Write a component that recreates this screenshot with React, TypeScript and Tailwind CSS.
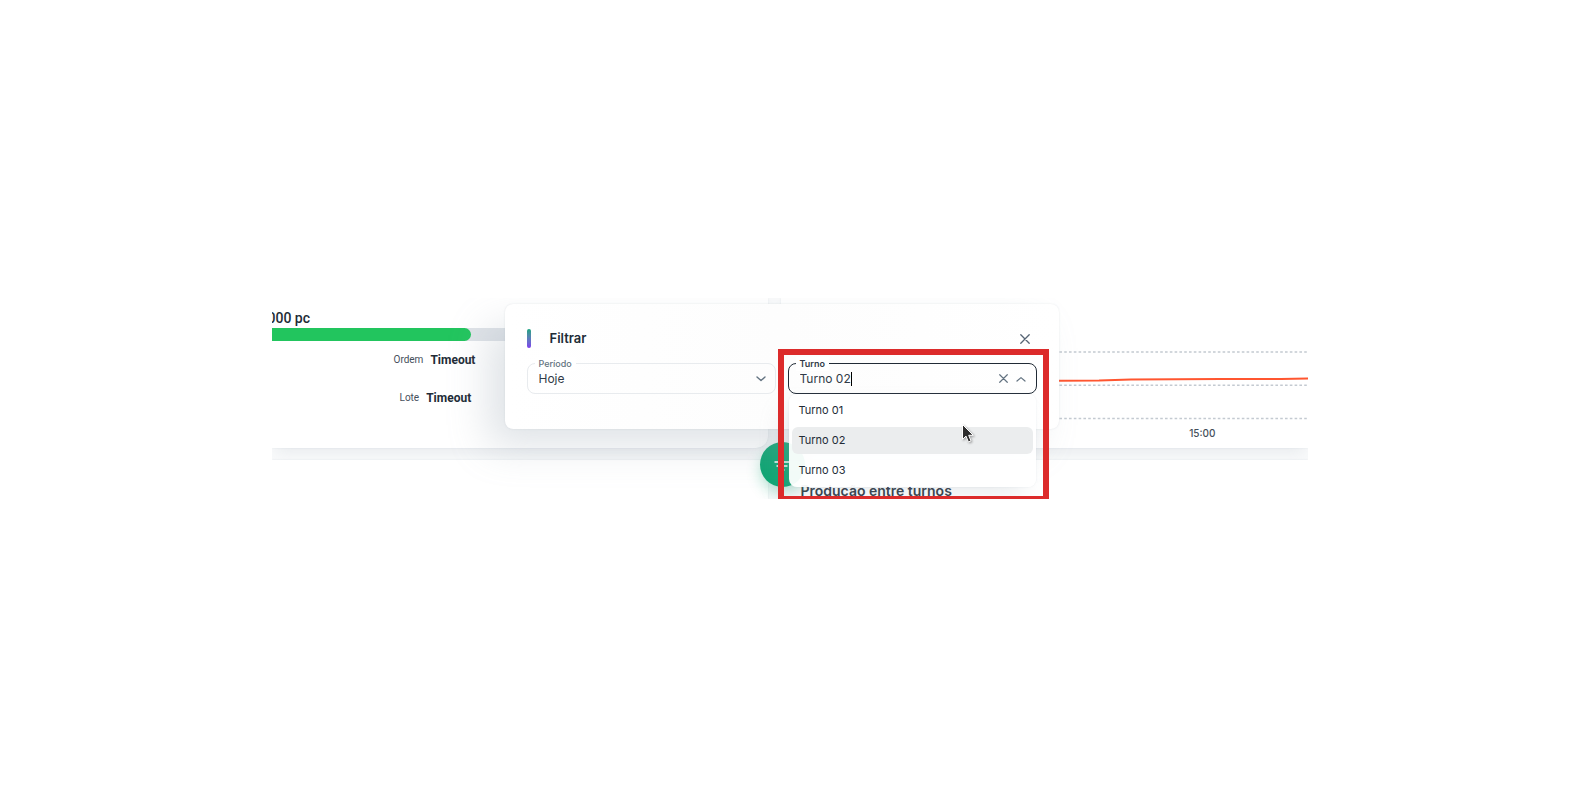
import { useState } from "react";

const shifts = ["Turno 01", "Turno 02", "Turno 03"];

function CloseIcon({ className }: { className: string }) {
  return (
    <svg viewBox="0 0 10 10" className={className} fill="none" stroke="currentColor" strokeWidth="1.3" strokeLinecap="round" aria-hidden="true">
      <path d="M.8.8 9.2 9.2M9.2.8.8 9.2" />
    </svg>
  );
}

function ProductionCard() {
  return (
    <section className="rounded-br-xl bg-white pt-3 pb-[42px] font-['Roboto',sans-serif] shadow-[0_0_2px_rgba(145,158,171,0.2),0_8px_16px_-4px_rgba(145,158,171,0.16)]">
      <p className="-ml-1 h-[18px] text-[14px] leading-4 font-medium">000 pc</p>
      <div className="h-[13px] bg-[#dfe3e8]">
        <div className="h-full w-[199px] rounded-r-full bg-[#22c55e]" />
      </div>
      <dl className="ml-[122px] flex flex-col gap-[22px] pt-[11px] leading-4">
        <div className="flex items-center gap-[7px]">
          <dt className="text-[10px] text-[#454f5b]">Ordem</dt>
          <dd className="text-[12px] font-bold">Timeout</dd>
        </div>
        <div className="ml-[6px] flex items-center gap-[7px]">
          <dt className="text-[10px] text-[#454f5b]">Lote</dt>
          <dd className="text-[12px] font-bold">Timeout</dd>
        </div>
      </dl>
    </section>
  );
}

function ChartCard() {
  return (
    <section className="rounded-bl-xl bg-white shadow-[0_0_2px_rgba(145,158,171,0.2),0_8px_16px_-4px_rgba(145,158,171,0.16)]">
      <svg viewBox="0 0 527 126" className="block h-[126px] w-full" preserveAspectRatio="xMaxYMin slice" aria-hidden="true">
        <g stroke="#c4cad1" strokeWidth="1.6" strokeDasharray="2.6 2.2">
          <path d="M0 54H527M0 87.3H527M0 120.5H527" />
        </g>
        <path d="M0 83 278 82.7 L318 82.5 350 81.6 440 81 500 81 527 80.4" fill="none" stroke="#ff5630" strokeWidth="2" />
      </svg>
      <p className="mr-[92px] text-right text-[10px] leading-[18px] font-medium text-[#454f5b]">15:00</p>
    </section>
  );
}

function FilterDialog() {
  const [shift, setShift] = useState("Turno 02");
  return (
    <div
      role="dialog"
      aria-label="Filtrar"
      className="absolute top-[6px] right-[249px] left-[233px] rounded-lg bg-white bg-linear-to-r from-white via-[#fdfdfd] to-white px-[22px] pt-[25px] pb-[35px] shadow-[0_0_2px_rgba(145,158,171,0.24),-20px_20px_40px_-4px_rgba(145,158,171,0.3)]"
    >
      <header className="flex h-[19px] items-center">
        <span className="h-full w-1 rounded-sm bg-linear-to-b from-[#10a37f] to-[#7c3aed]" />
        <h2 className="ml-[19px] flex-1 text-[13px] leading-[19px] font-semibold">Filtrar</h2>
        <button type="button" aria-label="Fechar" className="mr-[6px] p-px text-[#566474]">
          <CloseIcon className="size-[10px]" />
        </button>
      </header>

      <div className="mt-[15px] grid grid-cols-2 gap-3">
        <div className="relative flex h-[31px] items-center rounded-lg border border-[#e8ebee]">
          <label htmlFor="period" className="absolute -top-[7px] left-[7px] bg-white px-1 text-[9px] leading-[14px] font-medium text-[#637381]">
            Período
          </label>
          <select id="period" className="w-full appearance-none bg-transparent pr-8 pl-[11px] text-[12px] leading-4 text-[#313b47] outline-none">
            <option>Hoje</option>
          </select>
          <svg viewBox="0 0 10 6" className="pointer-events-none absolute right-[9px] h-[6px] w-[10px]" fill="none" stroke="#637381" strokeWidth="1.4" strokeLinecap="round" strokeLinejoin="round" aria-hidden="true">
            <path d="M1 1 5 4.6 9 1" />
          </svg>
        </div>

        <div className="relative flex h-[31px] items-center rounded-lg border border-[#212b36] pl-[11px]">
          <label htmlFor="shift" className="absolute -top-[7px] left-[7px] bg-white px-1 text-[9px] leading-[14px] font-semibold text-[#313b47]">
            Turno
          </label>
          <input
            id="shift"
            role="combobox"
            aria-expanded="true"
            aria-controls="shift-options"
            value={shift}
            onChange={(event) => setShift(event.target.value)}
            className="field-sizing-content bg-transparent text-[12px] leading-4 text-[#313b47] caret-transparent outline-none"
          />
          <span className="h-[14px] w-px bg-black" />
          <button type="button" aria-label="Limpar" onClick={() => setShift("")} className="ml-auto text-[#637381]">
            <CloseIcon className="size-[9px]" />
          </button>
          <button type="button" aria-label="Ocultar opções" className="mr-[10px] ml-[8px] text-[#637381]">
            <svg viewBox="0 0 10 6" className="h-[6px] w-[10px]" fill="none" stroke="currentColor" strokeWidth="1.2" strokeLinecap="round" strokeLinejoin="round" aria-hidden="true">
              <path d="M1 5 5 1.6 9 5" />
            </svg>
          </button>

          <ul
            id="shift-options"
            role="listbox"
            className="absolute top-full right-0 left-0 mt-px flex flex-col gap-[3px] rounded-lg bg-white/95 p-[3px] shadow-[0_0_2px_rgba(145,158,171,0.2),-10px_12px_24px_-4px_rgba(145,158,171,0.2)]"
          >
            {shifts.map((name) => (
              <li
                key={name}
                role="option"
                aria-selected={name === "Turno 02"}
                className="rounded-md px-[7px] text-[11px] leading-[27px] text-[#212b36] aria-selected:bg-[#ebedee]"
              >
                {name}
              </li>
            ))}
          </ul>

          <div className="pointer-events-none absolute -top-[15px] -right-[13px] -left-[11px] h-[153px] border-6 border-[#dc2b2b]" />
          <svg viewBox="0 0 14 21" className="pointer-events-none absolute top-[59px] right-[61px] h-[21px] w-[14px] drop-shadow-[1px_1px_1px_rgba(0,0,0,0.35)]" aria-hidden="true">
            <path d="M1.5 1.5V16.4L5 13.1 7.4 19 10 17.9 7.7 12.3H12.3Z" fill="#2d2d2d" stroke="#fff" strokeWidth="1" strokeLinejoin="round" />
          </svg>
        </div>
      </div>
    </div>
  );
}

export default function App() {
  return (
    <main className="flex min-h-screen items-center justify-center bg-white pt-px font-['Inter',sans-serif] text-[#212b36]">
      <div className="relative w-full max-w-[1036px] overflow-hidden bg-[#f9fafb]">
        <div className="grid grid-cols-[496px_1fr] gap-x-[13px] gap-y-[12px]">
          <ProductionCard />
          <ChartCard />
          <section className="bg-white shadow-[0_0_2px_rgba(145,158,171,0.2)]" />
          <section className="h-[39px] overflow-hidden bg-white pt-[21px] pl-[20px] shadow-[0_0_2px_rgba(145,158,171,0.2)]">
            <h2 className="text-[14px] leading-5 font-semibold text-[#313b47]">Produção entre turnos</h2>
          </section>
        </div>
        <button
          type="button"
          aria-label="Filtros"
          className="absolute bottom-[12px] left-[488px] flex size-[45px] items-center justify-center rounded-full bg-[#10a674] shadow-[0_6px_14px_rgba(16,166,116,0.3)]"
        >
          <svg viewBox="0 0 18 12" className="h-3 w-[18px]" stroke="#fff" strokeWidth="1.4" strokeLinecap="round" aria-hidden="true">
            <path d="M2 3H16M4 7H14M7 11H11" />
          </svg>
        </button>
        <FilterDialog />
      </div>
    </main>
  );
}
